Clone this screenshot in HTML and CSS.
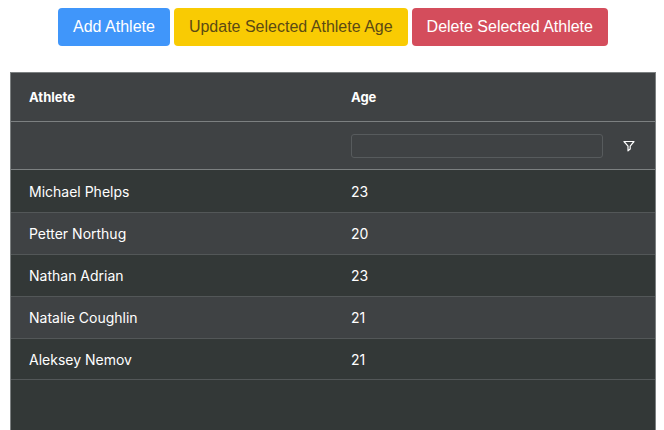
FILE: index.html
```html
<!DOCTYPE html>
<html lang="en">

<head>
    <meta charset="UTF-8">
    <meta name="viewport" content="width=device-width, initial-scale=1.0">
    <title>Athletes</title>
    <link rel="stylesheet" href="styles.css">
</head>

<body>
    <div class="toolbar">
        <button type="button" class="btn btn-primary">Add Athlete</button>
        <button type="button" class="btn btn-warning">Update Selected Athlete Age</button>
        <button type="button" class="btn btn-danger">Delete Selected Athlete</button>
    </div>

    <div class="grid">
        <table>
            <thead>
                <tr class="header-row">
                    <th scope="col">Athlete</th>
                    <th scope="col">Age</th>
                </tr>
                <tr class="filter-row">
                    <td></td>
                    <td>
                        <div class="filter">
                            <input type="text" class="filter-input" aria-label="Age filter">
                            <button type="button" class="filter-button" aria-label="Open filter menu">
                                <svg width="12" height="12" viewBox="0 0 12 12" fill="none" stroke="currentColor" stroke-width="1.2" stroke-linejoin="round">
                                    <path d="M1 1.5H11L7.2 6.2V9L5 10.8V6.2Z" />
                                </svg>
                            </button>
                        </div>
                    </td>
                </tr>
            </thead>
            <tbody>
                <tr>
                    <td>Michael Phelps</td>
                    <td>23</td>
                </tr>
                <tr>
                    <td>Petter Northug</td>
                    <td>20</td>
                </tr>
                <tr>
                    <td>Nathan Adrian</td>
                    <td>23</td>
                </tr>
                <tr>
                    <td>Natalie Coughlin</td>
                    <td>21</td>
                </tr>
                <tr>
                    <td>Aleksey Nemov</td>
                    <td>21</td>
                </tr>
            </tbody>
        </table>
    </div>
</body>

</html>
```

FILE: styles.css
```css
* {
    box-sizing: border-box;
}

body {
    display: flex;
    flex-direction: column;
    gap: 26px;
    min-height: 100vh;
    margin: 0;
    padding: 8px 8px 0 10px;
    background: #fff;
    font-family: Inter, 'Liberation Sans', sans-serif;
}

.toolbar {
    display: flex;
    flex-wrap: wrap;
    justify-content: center;
    gap: 4px;
}

.btn {
    height: 38px;
    padding: 0 14px;
    border: 1px solid transparent;
    border-radius: 4px;
    font-family: 'Liberation Sans', Arial, sans-serif;
    font-size: 16px;
    line-height: 24px;
    cursor: pointer;
}

.btn-primary {
    color: #fff;
    background-color: #4096fa;
}

.btn-warning {
    color: #5c4a14;
    background-color: #f9cb03;
}

.btn-danger {
    color: #fff;
    background-color: #d44d5c;
}

.grid {
    flex: 1;
    border: 1px solid #7c8081;
    border-bottom: none;
    background-color: #333837;
    color: #fff;
    font-size: 14px;
}

table {
    width: 100%;
    table-layout: fixed;
    border-collapse: separate;
    border-spacing: 0;
}

th,
td {
    height: 42px;
    padding: 0 18px;
    text-align: left;
}

.header-row th {
    height: 49px;
    font-size: 13px;
    font-weight: 700;
}

.filter-row td {
    height: 48px;
}

.header-row th,
.filter-row td {
    border-bottom: 1px solid #7c8081;
    background-color: #3f4244;
}

tbody tr + tr td {
    border-top: 1px solid #535758;
}

tbody tr:last-child td {
    border-bottom: 1px solid #535758;
}

tbody tr:nth-child(even) {
    background-color: #3f4244;
}

.filter {
    display: flex;
    align-items: center;
    gap: 20px;
    padding-right: 2px;
}

.filter-input {
    flex: 1;
    min-width: 0;
    height: 24px;
    padding: 0 6px;
    border: 1px solid #575b5d;
    border-radius: 3px;
    background: transparent;
    color: inherit;
    font: inherit;
}

.filter-button {
    display: flex;
    padding: 0;
    border: none;
    background: none;
    color: #fff;
    cursor: pointer;
}
```
